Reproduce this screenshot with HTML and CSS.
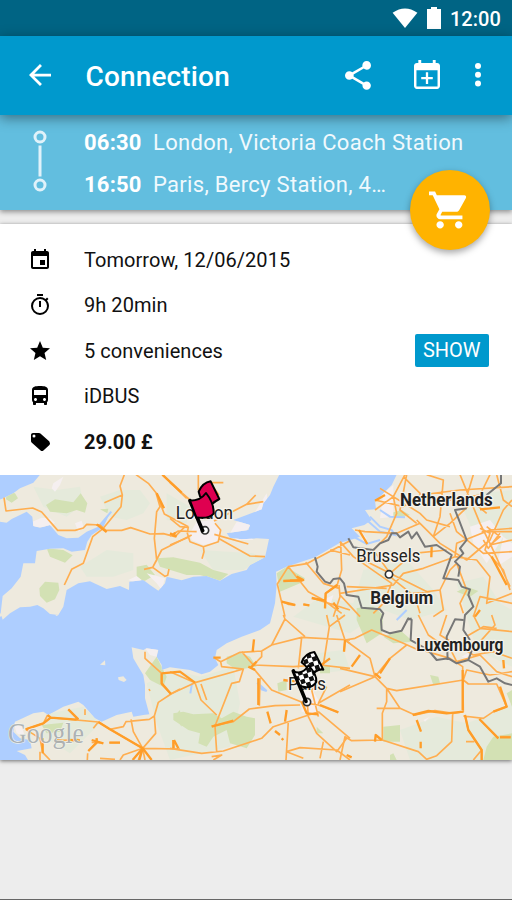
FILE: index.html
```html
<!DOCTYPE html>
<html lang="en">
<head>
<meta charset="utf-8">
<title>Connection</title>
<link rel="stylesheet" href="styles.css">
</head>
<body>
<div class="status">
  <svg class="wifi" viewBox="0 0 26 21"><path d="M0 5Q13-4 26 5L13 21Z"/></svg>
  <svg class="battery" viewBox="0 0 14 22"><path d="M4 0h6v2h4v20H0V2h4z"/></svg>
  <span class="clock">12:00</span>
</div>
<header class="toolbar">
  <svg class="back" viewBox="4 4 16 16"><path d="M20 11H7.83l5.59-5.59L12 4l-8 8 8 8 1.41-1.41L7.83 13H20v-2z"/></svg>
  <h1>Connection</h1>
  <svg class="share" viewBox="3 2 18 20"><path d="M18 16.08c-.76 0-1.44.3-1.96.77L8.91 12.7c.05-.23.09-.46.09-.7s-.04-.47-.09-.7l7.05-4.11c.54.5 1.25.81 2.04.81 1.66 0 3-1.34 3-3s-1.34-3-3-3-3 1.34-3 3c0 .24.04.47.09.7L8.04 9.81C7.5 9.31 6.79 9 6 9c-1.66 0-3 1.34-3 3s1.34 3 3 3c.79 0 1.5-.31 2.04-.81l7.12 4.16c-.05.21-.08.43-.08.65 0 1.61 1.31 2.92 2.92 2.92s2.92-1.31 2.92-2.92-1.31-2.92-2.92-2.92z"/></svg>
  <svg class="addcal" viewBox="3 1 18 20"><path d="M19 3h-1V1h-2v2H8V1H6v2H5c-1.1 0-2 .9-2 2v14c0 1.1.9 2 2 2h14c1.1 0 2-.9 2-2V5c0-1.1-.9-2-2-2zm.3 16.3H4.700V8h14.600zM11.200 9.500h1.600v3.200H16v1.600h-3.200v3.200h-1.600v-3.200H8v-1.600h3.200z"/></svg>
  <svg class="more" viewBox="0 0 6 24"><circle cx="3" cy="3" r="3"/><circle cx="3" cy="11.700" r="3"/><circle cx="3" cy="20.400" r="3"/></svg>
</header>
<section class="route">
  <svg class="track" viewBox="0 0 14 62"><circle cx="7" cy="7" r="5"/><circle cx="7" cy="55" r="5"/><path d="M7 15.500v31"/></svg>
  <div class="stops">
    <div class="stop"><b>06:30</b><span>London, Victoria Coach Station</span></div>
    <div class="stop"><b>16:50</b><span>Paris, Bercy Station, 4…</span></div>
  </div>
  <button class="fab"><svg viewBox="1 2 21 20"><path d="M7 18c-1.100 0-1.990.9-1.990 2S5.900 22 7 22s2-.9 2-2-.9-2-2-2zM1 2v2h2l3.600 7.590-1.350 2.450c-.16.28-.25.61-.25.96 0 1.100.9 2 2 2h12v-2H7.420c-.14 0-.25-.11-.25-.25l.03-.12.900-1.630h7.450c.75 0 1.410-.41 1.750-1.030l3.580-6.490A1 1 0 0 0 20 4H5.210l-.94-2H1zm16 16c-1.100 0-1.990.9-1.990 2s.89 2 1.990 2 2-.9 2-2-.9-2-2-2z"/></svg></button>
</section>
<main class="card">
  <ul class="details">
    <li><svg viewBox="0 0 24 24"><path d="M17 12h-5v5h5v-5zM16 1v2H8V1H6v2H5c-1.110 0-1.990.9-1.990 2L3 19c0 1.100.89 2 2 2h14c1.100 0 2-.9 2-2V5c0-1.100-.9-2-2-2h-1V1h-2zm3 18H5V8h14v11z"/></svg><span>Tomorrow, 12/06/2015</span></li>
    <li><svg viewBox="0 0 24 24"><path d="M15 1H9v2h6V1zm-4 13h2V8h-2v6zm8.030-6.610l1.420-1.420c-.43-.51-.9-.99-1.410-1.410l-1.420 1.420A8.960 8.960 0 0 0 12 4a9 9 0 1 0 9 9c0-2.120-.74-4.070-1.970-5.610zM12 20a7 7 0 1 1 0-14 7 7 0 0 1 0 14z"/></svg><span>9h 20min</span></li>
    <li><svg viewBox="0 0 24 24"><path d="M12 17.270L18.180 21l-1.640-7.030L22 9.240l-7.190-.61L12 2 9.190 8.630 2 9.240l5.460 4.730L5.820 21z"/></svg><span>5 conveniences</span><button class="show">SHOW</button></li>
    <li><svg viewBox="0 0 24 24"><path d="M4 16c0 .88.39 1.670 1 2.220V20c0 .55.45 1 1 1h1c.55 0 1-.45 1-1v-1h8v1c0 .55.45 1 1 1h1c.55 0 1-.45 1-1v-1.780c.61-.55 1-1.340 1-2.220V6c0-3.500-3.580-4-8-4s-8 .5-8 4v10zm3.500 1c-.83 0-1.500-.67-1.500-1.500S6.670 14 7.500 14s1.500.67 1.500 1.500S8.330 17 7.500 17zm9 0c-.83 0-1.500-.67-1.500-1.500s.67-1.500 1.500-1.500 1.500.67 1.500 1.500-.67 1.500-1.500 1.500zm1.500-6H6V6h12v5z"/></svg><span>iDBUS</span></li>
    <li><svg viewBox="0 0 24 24"><path d="M21.410 11.580l-9-8C12.050 3.220 11.550 3 11 3H5c-1.100 0-2 .9-2 2v6c0 .55.22 1.050.59 1.420l9 8c.36.36.86.58 1.410.58s1.050-.22 1.410-.59l6-5.500c.37-.36.59-.86.590-1.410s-.23-1.060-.59-1.420zM6 7.500a1.500 1.500 0 1 1 0-3 1.500 1.500 0 0 1 0 3z"/></svg><b>29.00 £</b></li>
  </ul>
  <!-- Map units are one third of a pixel -->
  <svg class="map" viewBox="0 15 1536 855">
    <defs>
      <clipPath id="land-clip"><use href="#england"/><use href="#continent"/></clipPath>
      <pattern id="checks" width="27" height="27" patternUnits="userSpaceOnUse" patternTransform="rotate(-18)"><path fill="#fff" d="M0 0h27v27H0z"/><path d="M0 0h13.500v13.500H0zM13.500 13.500h13.500v13.500H13.500z"/></pattern>
    </defs>
    <path class="sea" d="M0 0h1536v880H0z"/>
    <g class="land">
      <path id="england" d="M120 14L100 38 60 55 40 70 10 85-5 90V155L20 158 35 147 60 135 80 125 97 140 100 168 120 173 150 165 175 195 200 205 235 203 260 185 300 168 330 128 310 172 275 195 262 215 255 240 215 245 190 235 150 236 110 243 105 280 70 280 62 320 35 355 8 378 2 430 8 449 30 430 60 412 90 410 112 405 130 415 150 432 175 435 190 410 200 360 235 340 270 334 320 357 360 348 387 360 388 335 430 330 450 345 475 362 495 340 500 320 545 331 580 320 620 318 660 332 695 312 740 300 750 285 795 262 800 240 807 207 770 205 725 208 690 203 680 190 710 185 745 180 750 165 700 150 740 135 785 118 790 100 810 75 820 50 838 14Z"/>
      <path id="continent" d="M1190 14L1175 45 1145 75 1125 92 1128 118 1095 120 1115 150 1093 165 1055 175 1080 200 1060 207 1020 218 945 262 860 290 828 305 830 345 825 400 815 440 810 460 780 480 725 500 680 520 650 540 645 565 655 585 630 605 605 613 570 600 510 592 485 600 485 585 470 560 475 540 440 535 430 540 395 532 400 565 415 590 430 615 435 645 435 685 448 733 430 735 400 740 395 725 350 735 305 755 285 745 250 705 235 695 190 710 145 735 130 725 100 730 45 755 40 785 60 805 90 810 95 835 50 843 75 855 90 880H1540V0Z"/>
      <path d="M0 430L14 435 0 440ZM165 434l10 1-5 3ZM354 622L370 619 380 630 372 636 356 630ZM300 584L315 571 316 586Z"/>
    </g>
    <g clip-path="url(#land-clip)">
      <g class="tint">
        <path d="M300 80L360 60 420 60 450 100 430 130 380 150 330 140ZM240 290L320 240 400 250 400 300 340 320 260 320ZM130 110L100 50 170 60 240 50 250 100 200 140ZM500 70L570 110 560 160 500 150ZM600 240L760 250 790 265 730 300 640 300ZM440 640L520 600 600 620 700 590 720 700 690 830 510 870 470 760ZM880 440L960 380 1060 400 1090 300 1220 270 1300 360 1340 420 1230 450 1150 420 1050 490ZM1200 780L1310 740 1400 760 1480 730 1536 700V870H1230ZM1390 120L1430 70 1536 60V250L1440 230ZM1370 340L1450 320 1500 400 1536 420V590L1430 540ZM150 730L250 710 300 760 210 850 130 800ZM950 550L1030 540 1050 600 960 610Z"/>
      </g>
      <g class="park">
        <path d="M138 105L165 88 220 97 242 70 262 100 255 128 230 120 200 130 150 125ZM140 235L190 240 218 256 195 278 150 260ZM118 355L135 335 175 338 178 360 165 388 140 398 120 378ZM20 65L45 70 54 85 35 98 18 88ZM410 290L440 284 465 315 430 335 410 320ZM470 265L520 262 600 278 640 300 685 312 660 332 600 315 560 315 480 290ZM300 118L325 116 322 130ZM830 310L860 290 890 310 915 325 900 340 840 365ZM1070 414L1120 410 1150 435 1145 490 1100 520 1070 450ZM1150 500L1200 480 1240 515 1180 520ZM1170 130L1205 120 1230 135 1190 145ZM1370 365L1400 350 1435 363 1410 380ZM1520 670L1536 660V710ZM1460 830L1480 800 1536 790V870H1450ZM1150 770L1200 765 1200 815 1150 815ZM1170 855L1180 850 1190 870H1170ZM435 610L470 560 500 620 490 650 450 630ZM525 735L540 720 545 770 525 745ZM125 765L190 758 180 785 140 790ZM520 730L550 725 580 733 640 730 665 745 700 725 740 740 765 745 765 795 740 835 690 820 680 780 640 800 620 830 595 820 600 790 565 780 520 750ZM680 560L720 548 750 560 770 590 710 600 680 580ZM832 640L860 630 860 660 835 665ZM950 770L970 790 950 790ZM960 590L990 585 990 610 960 610ZM1290 615L1315 620 1320 640 1300 645Z"/>
      </g>
      <g class="urban">
        <path d="M160 40L190 20 180 45 165 65 155 55ZM97 155L125 143 150 145 165 158 145 172 100 172ZM225 160L245 152 250 170 235 185ZM385 330L410 318 425 330 410 340ZM440 310L495 325 485 360 470 340ZM570 190L590 155 640 150 665 180 650 215 610 225 575 210ZM690 190L710 155 750 150 800 70 805 110 740 180 760 210 710 210ZM40 755L65 770 75 800 50 790ZM435 535L475 535 470 560 450 555ZM1150 70L1180 45 1180 140 1140 145ZM1410 170L1470 150 1510 200 1460 280 1420 220ZM1510 200L1536 220V260L1490 290ZM900 660L935 655 955 690 950 735 905 725ZM1080 180L1100 205 1090 220ZM1165 300L1185 310 1170 325ZM970 390L1000 375 990 410ZM1270 750L1290 740 1275 755ZM1385 560L1410 545 1400 565Z"/>
      </g>
    </g>
    <path class="inlet" d="M1100 150l40 35 45 10-10-15-35-10-30-30M1060 200l40 22 40-12M1140 120l30 20 45 2M772 638l28 25-15-5zM576 640l-5 30M1190 450l30-30M300 165l34-40"/>
    <g class="road">
      <path d="M12 83L18 123 98 114 125 126 173 181 225 181 250 174 260 163 300 165 318 181 365 181 392 173 450 192 490 191 525 200 555 170M193 345L215 298 250 280 278 200 310 175 363 110 367 75 360 48 373 14M313 98L367 75M408 14L445 40 468 68 493 132 565 170M468 68L480 110 470 125 463 205 470 270 458 292 432 298M458 292L495 319 503 316 507 297M458 292L485 240 550 208 575 195M487 14L560 85"/>
      <g transform="translate(510)"><path d="M85 14V60L120 38 147 75M120 38H160M0 38L60 90M132 153L230 103 257 75M230 103L280 95M0 145L30 170 55 172M0 198L25 183 80 185M55 170L52 190 60 215 100 230 145 215 152 180 135 160M0 225L55 202M100 230L102 245 96 266M133 193L235 222M145 205L240 258 285 260M345 440L322 342 355 290 410 281 540 212M355 290L415 365 460 390 515 430M407 277L460 340 507 355M332 392L355 403 377 405M400 403L418 406M340 333L395 334 360 330M500 345L467 370 465 415M507 345L510 380 490 440M512 215L515 300 500 350M480 240L540 255M430 385L540 420M510 375L570 440"/></g>
      <g transform="translate(1020)"><path d="M105 120L160 80 195 14M120 55L240 130 260 150 330 170M105 90L190 110 240 75 360 60 516 50M45 180L75 185 170 190 240 160 280 200 300 140 310 30 260 14M280 200L330 160 420 75 450 14M360 14L420 160 450 220 510 350M160 80L170 130 140 200 100 240 150 310 270 370M0 215L40 260 155 340 130 400 100 430M0 370L160 345 190 310 250 295 345 260 350 220 450 180 516 175M230 150L300 220 380 270 450 210 490 120 516 90M330 130L350 185 430 250 516 245M420 175L450 190 435 240 490 300 510 360M300 360L330 300 350 280 380 360 360 400 370 430M150 320L225 380 240 430M20 350L140 355M300 360L310 420 280 440M60 265L150 310 220 250 320 240M190 20L250 80 330 90 420 75M200 14L180 120 230 160M400 14L380 80 440 130M470 14L490 90 516 110M345 260L410 270 450 320 440 400 516 370M180 415L220 370 300 360M425 185H516M440 170L480 200 450 225 516 210M430 210L445 235 480 190M400 440L420 380 516 400"/></g>
      <g transform="translate(0 435)"><path d="M77 343L130 325 152 308 295 321 330 343 428 400 540 402M130 325L143 300M205 283L235 314M255 283V300M295 321L280 340M330 343L370 335 378 320 448 313 463 303 475 262 513 237 540 222M435 110V130L485 175 485 208 513 237M463 303L467 355 428 400 415 435M393 313L400 350 428 400 370 420 360 435M77 343L120 370 128 412 150 435M120 410V435M170 377L235 374M265 408L290 382 290 370M262 435L263 415M275 382L310 384M328 383H360M428 400L435 435M520 375L522 400M300 430L345 433M447 222L450 228"/></g>
      <g transform="translate(510 435)"><path d="M0 170L75 203 220 162 155 155 152 140 135 130M152 140L210 112 275 108 305 90 345 12 340 0M275 108L275 125 250 150 215 110M250 150L370 155 450 150 540 160M305 90L395 67 540 75M395 67L385 160M345 12L405 65M460 150L478 35 470 0M478 35L525 0M500 0L525 75 540 85M75 203L0 238M75 203L93 255 140 300M220 162L208 200 185 205 135 333 140 410M0 400L95 415 160 408 275 370 310 335 445 290M125 333L190 320 238 282 315 272 390 270M250 160L305 225 400 263M412 265L445 270 505 292M412 265L415 305 440 355 500 410 530 370M445 290L540 370M445 305L425 225 445 210M350 410L390 398 500 405 540 435M355 318L348 435M350 410L400 430M460 380L450 430M470 215L445 265 540 210M270 190L268 272M93 207L110 255M125 425L155 420 130 435"/></g>
      <g transform="translate(1020 435)"><path d="M15 75L45 70 95 45 190 85 235 105M15 75L90 130 105 185 140 220 180 280 225 300 285 287 340 295 370 290 368 155 330 130 230 100M0 160L105 185 0 230M105 185L150 130 200 90M140 220L170 227 370 195 385 207 470 207 500 275 460 290 430 310 370 303M140 220V260L127 295V375L35 377 15 365 0 435M127 375L235 410 260 433 290 422 335 380 338 295M375 300L385 345 425 405 425 435M418 312L475 370M370 195L380 165 450 180 516 170M235 0L265 60 335 110 350 140 420 120 470 170 516 185M320 0L300 60 400 120 460 110 516 130M400 0L420 40 516 50M370 70L430 35 470 40M455 0L465 30 420 80M480 365H512M378 380H403M400 435L425 405M110 280H180M15 75L12 110"/></g>
    </g>
    <g class="road thick">
      <path d="M487 14L545 68M470 70L492 115M290 163L320 186M510 190L530 200M525 187L520 200M850 333L910 330 890 320M845 395L885 405M910 403L928 406M1012 345L977 370 975 415M935 384L975 392M1000 398L1015 418M1125 92L1155 75M1077 180L1102 222M1295 230L1294 262M1440 118L1500 112M1425 440L1440 420M1475 260L1520 345M77 778L130 760 152 743 230 749M152 743L143 735M295 756L330 778 428 835 455 870M485 610L540 605 585 638M485 610V640L513 672M205 718L235 748M428 835L398 870M428 835L418 870M275 810L310 820M290 805V820M128 805V850M170 811L185 813M205 810L240 811M265 843L290 818M328 818H360M520 810V835M640 563H662M750 595L770 575M745 590L765 600M762 508L758 545M635 770L700 752M775 625V705M802 725L812 760M860 720L855 755M825 783L840 795M845 805L850 810M522 810L535 835M925 640L850 630M905 695L920 730 955 733M960 705L1015 727M1035 510L1032 545M1055 590L1080 555M1140 610L1170 565M1125 610L1142 625M1238 735L1285 723 1340 730 1390 725M1250 750L1263 785M1262 815V835M1388 600V720M1395 735L1405 780 1445 840 1445 870M1438 747L1495 805M1500 802H1532M1500 650L1520 710 1480 725M1145 810L1127 795 1125 815M1040 855L1055 862M1510 570L1512 595M950 595L990 565"/>
    </g>
    <g class="border">
      <path d="M945 262L953 290 950 305 975 335 990 340 1000 327 1020 325 1032 340 1040 375 1075 380 1085 413 1140 418 1150 430 1143 450 1145 480 1170 490 1205 482 1225 445 1235 450 1232 510 1240 515 1285 540 1310 570 1345 565 1370 580 1405 570 1440 590 1465 635 1490 625 1515 640 1536 645M1045 205L1060 232 1080 235 1120 240 1140 220 1165 210 1175 190 1190 190 1200 202 1225 185 1235 205 1250 187 1275 230 1310 225 1355 255 1330 325 1375 330 1385 350 1410 358 1405 375 1420 410 1395 435 1390 480 1410 510M1503 14V40L1460 75M1400 115L1365 120 1375 145 1400 210 1380 235 1390 250 1365 275 1380 290 1375 320M1343 570L1340 500 1365 448 1390 450M1220 450L1235 445M1405 570L1425 515"/>
    </g>
    <g class="place">
      <text x="527" y="147" textLength="172" lengthAdjust="spacingAndGlyphs">London</text>
      <text x="1069" y="277" textLength="192" lengthAdjust="spacingAndGlyphs">Brussels</text>
      <text x="864" y="659" textLength="114" lengthAdjust="spacingAndGlyphs">Paris</text>
      <text class="country" x="1200" y="108" textLength="278" lengthAdjust="spacingAndGlyphs">Netherlands</text>
      <text class="country" x="1111" y="401" textLength="189" lengthAdjust="spacingAndGlyphs">Belgium</text>
      <text class="country" x="1249" y="544" textLength="261" lengthAdjust="spacingAndGlyphs">Luxembourg</text>
    </g>
    <g class="town"><circle cx="615" cy="181" r="11"/><circle cx="1167" cy="313" r="11"/><circle cx="921" cy="696" r="11"/></g>
    <g class="flag red">
      <path class="pole" d="M570 92L608 182"/>
      <path d="M596 65Q608 38 632 34L658 87Q632 101 621 120Q613 85 600 79Z"/>
      <path d="M570 92Q602 92 618 69Q642 99 641 131Q625 148 589 142Z"/>
    </g>
    <g class="flag checked">
      <path class="pole" d="M880 603L918 694"/>
      <path d="M905 577Q914 550 943 546L970 599Q947 596 934 620Q925 590 905 577Z"/>
      <path d="M880 604Q908 616 926 586Q952 617 949 635Q937 658 901 649Z"/>
    </g>
    <text class="google" x="24" y="820" textLength="228" lengthAdjust="spacingAndGlyphs">Google</text>
  </svg>
</main>
</body>
</html>
```
FILE: styles.css
```css
* { box-sizing: border-box; }
html, body { height: 100%; }
body { margin: 0; display: flex; flex-direction: column; overflow: hidden; background: #ededed; border-bottom: 1px solid #666; color: #111; font-family: Roboto, sans-serif; }
svg { display: block; flex: none; fill: currentColor; }
button { border: 0; padding: 0; font-family: inherit; color: #fff; }

.status { flex: none; height: 35.5px; display: flex; justify-content: flex-end; padding: 7px 12px 0 0; background: #006484; color: #fff; }
.wifi { width: 26px; height: 20px; margin: 1px 9px 0 0; }
.battery { width: 14px; height: 22px; margin-right: 9px; }
.clock { width: 50px; font-size: 20px; font-weight: 500; line-height: 24px; white-space: nowrap; }

.toolbar { flex: none; position: relative; z-index: 2; height: 79.5px; display: flex; align-items: center; padding: 0 31px 0 29px; background: #0099cd; color: #fff; box-shadow: 0 3px 12px rgba(0,0,0,.42); }
.back { width: 22px; height: 22px; margin-right: 34.5px; }
.toolbar h1 { margin: 3px auto 0 0; font-size: 28px; font-weight: 500; line-height: 36px; letter-spacing: .15px; }
.share { width: 26px; height: 29px; margin-right: 43px; }
.addcal { width: 26px; height: 29px; margin: -2px 35px 0 0; }
.more { width: 6px; height: 24px; }

.route { flex: none; position: relative; z-index: 1; height: 95px; display: flex; padding: 15px 0 0 33px; background: #62bedf; color: #fff; box-shadow: 0 2px 5px rgba(0,0,0,.4); }
.track { width: 14px; height: 62px; margin-right: 37px; fill: none; stroke: #e0f2fa; stroke-width: 3; }
.stop { height: 42px; display: flex; gap: 12px; font-size: 22px; line-height: 26px; white-space: nowrap; }
.stop b { width: 57px; letter-spacing: .2px; }
.stop span { color: #f0f9fd; letter-spacing: .3px; }
.fab { position: absolute; right: 22.5px; top: 54.5px; width: 80px; height: 80px; display: grid; place-items: center; border-radius: 50%; background: #ffb300; box-shadow: 0 3px 7px rgba(0,0,0,.35); }
.fab svg { width: 39px; height: 38px; margin-left: -3px; }

.card { flex: none; margin-top: 14px; background: #fff; box-shadow: 0 1px 4px rgba(0,0,0,.55); }
.details { list-style: none; height: 251px; margin: 0; padding: 12.800px 23px 0 28px; }
.details li { height: 45.500px; display: flex; align-items: center; font-size: 20px; line-height: 24px; }
.details span { letter-spacing: .05px; }
.details svg { width: 24px; height: 24px; margin-right: 32px; color: #000; }
.show { width: 74.500px; height: 33px; margin: -1px 0 0 auto; border-radius: 2px; background: #0099cd; font-size: 20px; }

.map { width: 512px; height: 285px; }
.sea { fill: #aeceff; }
.land { fill: #eeeade; }
.tint { fill: #e5eadb; }
.park { fill: #d3e1b4; }
.urban { fill: #f5eff0; }
.inlet { fill: none; stroke: #aeceff; stroke-width: 6; }
.road { fill: none; stroke: #ffae50; stroke-width: 5; stroke-linejoin: round; }
.road.thick { stroke: #ff9d28; stroke-width: 7; }
.border { fill: none; stroke: #777; stroke-width: 6; stroke-linejoin: round; }
.place { fill: #222; font-size: 54px; stroke: #f6f3eb; stroke-width: 8; stroke-linejoin: round; paint-order: stroke; }
.place .country { font-size: 53px; font-weight: 700; }
.town { fill: #fff; stroke: #333; stroke-width: 5; }
.flag { stroke: #000; stroke-width: 6; stroke-linejoin: round; stroke-linecap: round; }
.flag .pole { stroke-width: 11; }
.red { fill: #df0050; }
.checked { fill: url(#checks); }
.google { fill: #a7adb0; stroke: #f4f4ee; stroke-width: 4; paint-order: stroke; font-family: "Liberation Serif", serif; font-size: 86px; opacity: .9; }
```
